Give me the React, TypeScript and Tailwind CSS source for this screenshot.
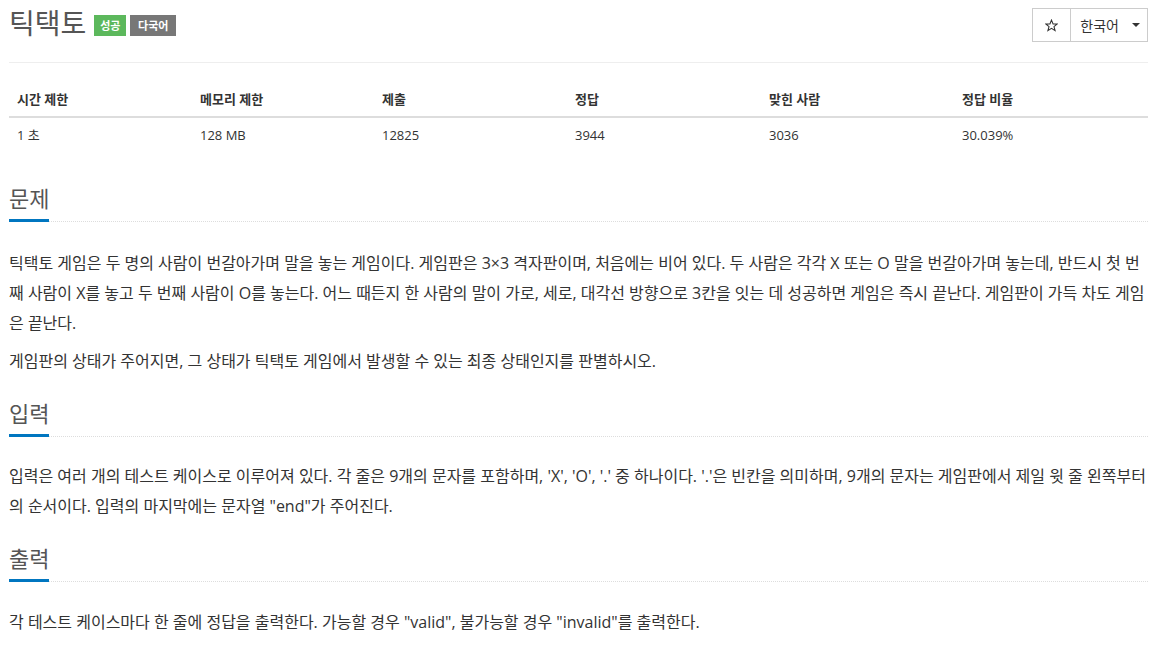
const FONT = { fontFamily: '"Open Sans", "Noto Sans CJK KR", sans-serif' };

const stats = [
  ["시간 제한", "1 초", "w-[183px]"],
  ["메모리 제한", "128 MB", "w-[182px]"],
  ["제출", "12825", "w-[193px]"],
  ["정답", "3944", "w-[194px]"],
  ["맞힌 사람", "3036", "w-[193px]"],
  ["정답 비율", "30.039%", ""],
];

function Headline({ title }: { title: string }) {
  return (
    <div className="border-b border-dotted border-[#ddd] relative">
      <h2 className="text-[22px] leading-[30px] text-[#555] pb-[8px]">{title}</h2>
      <span className="absolute left-0 -bottom-[1px] h-[3px] w-[40px] bg-[#0076c0]" />
    </div>
  );
}

function StarIcon() {
  return (
    <svg width="13" height="13" viewBox="0 0 24 24" fill="none" stroke="#333" strokeWidth="2" strokeLinejoin="miter">
      <polygon points="12,2 14.9,9 22.5,9.3 16.6,14.1 18.6,21.5 12,17.3 5.4,21.5 7.4,14.1 1.5,9.3 9.1,9" />
    </svg>
  );
}

export default function App() {
  return (
    <div className="bg-white text-[#333] text-[14px] pl-[9px] pr-[8px] min-h-[645px]" style={FONT}>
      <div className="flex items-start justify-between pt-[4px] pb-[20px] border-b border-[#eee]">
        <div className="flex items-center">
          <h1 className="text-[28px] leading-[38px] text-[#555] mr-[8px]">틱택토</h1>
          <span className="bg-[#5cb85c] text-white text-[11px] font-bold w-[32px] text-center leading-[21px] mt-[4px] mr-[4px]">
            성공
          </span>
          <span className="bg-[#777] text-white text-[11px] font-bold w-[46px] text-center leading-[21px] mt-[4px]">
            다국어
          </span>
        </div>
        <div className="flex border border-[#ccc] mt-[4px] h-[34px]">
          <button className="w-[38px] flex items-center justify-center border-r border-[#ccc]">
            <StarIcon />
          </button>
          <button className="flex items-center gap-[13px] pl-[9px] pr-[7px] text-[14px]">
            한국어
            <span className="w-0 h-0 border-l-[4px] border-r-[4px] border-t-[4px] border-l-transparent border-r-transparent border-t-[#333]" />
          </button>
        </div>
      </div>

      <table className="w-full mt-[20px] text-[13px] table-fixed">
        <thead>
          <tr className="border-b-2 border-[#ddd]">
            {stats.map(([h, , w]) => (
              <th key={h} className={"text-left font-bold px-[8px] pt-[7px] pb-[6px] " + w}>
                {h}
              </th>
            ))}
          </tr>
        </thead>
        <tbody>
          <tr>
            {stats.map(([h, v]) => (
              <td key={h} className="px-[8px] py-[8px]">
                {v}
              </td>
            ))}
          </tr>
        </tbody>
      </table>

      <section className="mt-[30px]">
        <Headline title="문제" />
        <div className="text-[16px] leading-[30px] pt-[26px] space-y-[8px]">
          <p>
            틱택토 게임은 두 명의 사람이 번갈아가며 말을 놓는 게임이다. 게임판은 3×3 격자판이며, 처음에는 비어 있다. 두 사람은 각각 X 또는 O 말을 번갈아가며 놓는데, 반드시 첫 번째 사람이 X를 놓고 두 번째 사람이 O를 놓는다. 어느 때든지 한 사람의 말이 가로, 세로, 대각선 방향으로 3칸을 잇는 데 성공하면 게임은 즉시 끝난다. 게임판이 가득 차도 게임은 끝난다.
          </p>
          <p>게임판의 상태가 주어지면, 그 상태가 틱택토 게임에서 발생할 수 있는 최종 상태인지를 판별하시오.</p>
        </div>
      </section>

      <section className="mt-[22px]">
        <Headline title="입력" />
        <div className="text-[16px] leading-[30px] pt-[24px]">
          <p>
            입력은 여러 개의 테스트 케이스로 이루어져 있다. 각 줄은 9개의 문자를 포함하며, 'X', 'O', '.' 중 하나이다. '.'은 빈칸을 의미하며, 9개의 문자는 게임판에서 제일 윗 줄 왼쪽부터의 순서이다. 입력의 마지막에는 문자열 "end"가 주어진다.
          </p>
        </div>
      </section>

      <section className="mt-[22px]">
        <Headline title="출력" />
        <div className="text-[16px] leading-[30px] pt-[25px]">
          <p>각 테스트 케이스마다 한 줄에 정답을 출력한다. 가능할 경우 "valid", 불가능할 경우 "invalid"를 출력한다.</p>
        </div>
      </section>
    </div>
  );
}
